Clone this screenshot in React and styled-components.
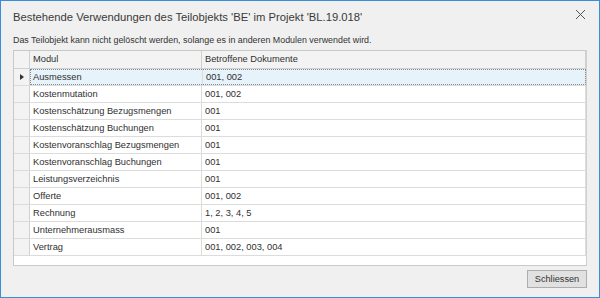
import styled, { createGlobalStyle } from "styled-components";

const rows = [
  ["Ausmessen", "001, 002"],
  ["Kostenmutation", "001, 002"],
  ["Kostenschätzung Bezugsmengen", "001"],
  ["Kostenschätzung Buchungen", "001"],
  ["Kostenvoranschlag Bezugsmengen", "001"],
  ["Kostenvoranschlag Buchungen", "001"],
  ["Leistungsverzeichnis", "001"],
  ["Offerte", "001, 002"],
  ["Rechnung", "1, 2, 3, 4, 5"],
  ["Unternehmerausmass", "001"],
  ["Vertrag", "001, 002, 003, 004"],
];

const Global = createGlobalStyle`
  html, body { margin: 0; padding: 0; background: #f0f0f0; }
`;

const Window = styled.div`
  width: 600px;
  height: 298px;
  box-sizing: border-box;
  border: 1px solid #3b8cd9;
  background: #f0f0f0;
  display: flex;
  flex-direction: column;
  padding: 0 12px 9px;
  font-family: "Liberation Sans", Arial, sans-serif;
  color: #333;
`;

const TitleBar = styled.div`
  height: 30px;
  display: flex;
  align-items: center;
  justify-content: space-between;
`;

const Title = styled.h1`
  margin: 0;
  padding-top: 2px;
  font-size: 11.25px;
  font-weight: 400;
  color: #3a3a3a;
  white-space: nowrap;
`;

const CloseButton = styled.button`
  align-self: flex-start;
  margin: 8px 1px 0 0;
  width: 11px;
  height: 11px;
  padding: 0;
  border: 0;
  background: none;
  display: flex;
`;

const Info = styled.p`
  margin: 0;
  height: 19px;
  line-height: 19px;
  font-size: 8.9px;
  color: #333;
  white-space: nowrap;
`;

const Grid = styled.div`
  flex: 1;
  border: 1px solid #c9c9c9;
  border-right-color: #d0d0d0;
  background: #fff;
  display: flex;
  flex-direction: column;
`;

const Row = styled.div`
  display: grid;
  grid-template-columns: 16px 172px 1fr;
  height: ${(p) => (p.$header ? 17 : 16)}px;
  border-bottom: 1px solid ${(p) => (p.$header ? "#d0d0d0" : "#dcdcdc")};
  background: ${(p) => (p.$header ? "#f3f3f3" : "#fff")};
  font-size: 9.3px;
  line-height: ${(p) => (p.$header ? 17 : 16)}px;
`;

const Indicator = styled.div`
  background: #f3f3f3;
  border-right: 1px solid #d0d0d0;
  display: flex;
  align-items: center;
  justify-content: center;
`;

const Cell = styled.div`
  padding-left: 3px;
  border-right: 1px solid ${(p) => (p.$header ? "#d0d0d0" : "#dcdcdc")};
  white-space: nowrap;
  overflow: hidden;
  color: #303030;
`;

const Selected = styled.div`
  grid-column: 2 / 4;
  display: grid;
  grid-template-columns: 173px 1fr;
  background: #e6f3fb;
  outline: 1px dotted #8a8a8a;
  outline-offset: -1px;
`;

const SelCell = styled.div`
  padding-left: 3px;
  border-right: 1px solid #dcdcdc;
  white-space: nowrap;
  color: #303030;
`;

const Triangle = styled.span`
  width: 0;
  height: 0;
  border-top: 3.5px solid transparent;
  border-bottom: 3.5px solid transparent;
  border-left: 4px solid #333;
`;

const Filler = styled.div`
  flex: 1;
  background: #fff;
`;

const Footer = styled.div`
  display: flex;
  justify-content: flex-end;
  padding-top: 4px;
`;

const Button = styled.button`
  width: 60px;
  height: 18px;
  padding: 0;
  border: 1px solid #adadad;
  background: #e1e1e1;
  font-family: "Liberation Sans", Arial, sans-serif;
  font-size: 9.2px;
  color: #333;
`;

export default function App() {
  return (
    <>
      <Global />
      <Window>
        <TitleBar>
          <Title>Bestehende Verwendungen des Teilobjekts 'BE' im Projekt 'BL.19.018'</Title>
          <CloseButton aria-label="close">
            <svg width="11" height="11" viewBox="0 0 11 11">
              <path d="M1 1 L10 10 M10 1 L1 10" stroke="#555" strokeWidth="1" />
            </svg>
          </CloseButton>
        </TitleBar>
        <Info>Das Teilobjekt kann nicht gelöscht werden, solange es in anderen Modulen verwendet wird.</Info>
        <Grid>
          <Row $header>
            <Indicator />
            <Cell $header>Modul</Cell>
            <Cell $header>Betroffene Dokumente</Cell>
          </Row>
          {rows.map(([modul, docs], i) => (
            <Row key={modul}>
              <Indicator>{i === 0 && <Triangle />}</Indicator>
              {i === 0 ? (
                <Selected>
                  <SelCell>{modul}</SelCell>
                  <SelCell>{docs}</SelCell>
                </Selected>
              ) : (
                <>
                  <Cell>{modul}</Cell>
                  <Cell>{docs}</Cell>
                </>
              )}
            </Row>
          ))}
          <Filler />
        </Grid>
        <Footer>
          <Button>Schliessen</Button>
        </Footer>
      </Window>
    </>
  );
}
